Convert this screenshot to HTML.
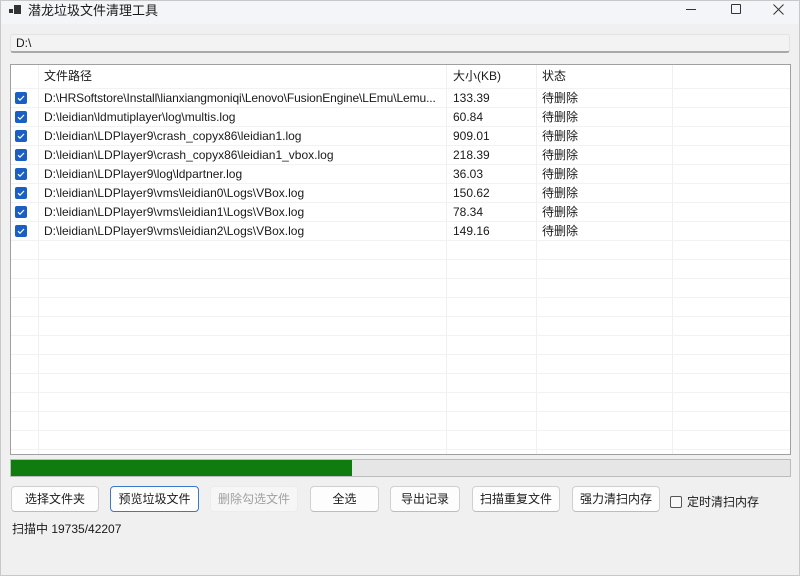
<!DOCTYPE html>
<html><head><meta charset="utf-8"><style>
*{box-sizing:border-box;margin:0;padding:0}
body{width:800px;height:576px;overflow:hidden;background:#f0f0f0;font-family:"Liberation Sans","Noto Sans CJK SC",sans-serif;font-size:12px;color:#1a1a1a;position:relative}
.abs{position:absolute}
.title{left:0;top:0;width:800px;height:24px;background:#f3f5f9}
.tb{left:10px;top:34px;width:780px;height:19px;background:#f3f3f3;border:1px solid #e2e2e2;border-bottom:2px solid #a8a8a8;border-radius:3px;padding:0 5px;font-size:12px;line-height:16px}
.tbl{left:10px;top:64px;width:781px;height:391px;background:#fff;border:1px solid #a0a0a0;overflow:hidden}
.row{position:absolute;left:0;width:780px;height:19px;border-bottom:1px solid #f2f2f2}
.row span{position:absolute;top:0;line-height:18px;height:18px;white-space:nowrap}
.vl{position:absolute;top:0;width:1px;height:391px;background:#f0f0f0}
.cb{position:absolute;left:4px;top:3px;width:12px;height:12px;border-radius:2px;background:#1a5fc4}
.cb svg{position:absolute;left:0;top:0}
.btn{position:absolute;top:486px;height:26px;background:#fdfdfd;border:1px solid #d0d0d0;border-bottom-color:#bcbcbc;border-radius:4px;text-align:center;line-height:24px;font-size:12px}
</style></head><body>
<div class="abs title"></div>
<div class="abs" style="left:9px;top:9px;width:4px;height:4px;background:#333"></div>
<div class="abs" style="left:14px;top:5px;width:7px;height:9px;background:#333"></div>
<div class="abs" style="left:28px;top:1px;font-size:13px;line-height:20px">潜龙垃圾文件清理工具</div>
<div class="abs" style="left:686px;top:9px;width:10px;height:1px;background:#333"></div>
<div class="abs" style="left:731px;top:4px;width:10px;height:10px;border:1px solid #333;border-radius:1px"></div>
<svg class="abs" style="left:773px;top:4px" width="11" height="11"><path d="M0.5 0.5L10.5 10.5M10.5 0.5L0.5 10.5" stroke="#333" stroke-width="1"/></svg>
<div class="abs tb">D:\</div>
<div class="abs tbl">
 <div class="row" style="top:0;height:24px"><span style="left:33px;top:2px">文件路径</span><span style="left:442px;top:2px">大小(KB)</span><span style="left:531px;top:2px">状态</span></div>
 <div class="vl" style="left:27px"></div><div class="vl" style="left:435px"></div><div class="vl" style="left:525px"></div><div class="vl" style="left:661px"></div>
 <div class="row" style="top:24px"><div class="cb"><svg width="12" height="12"><path d="M3 6.2L5 8.2L9 4" fill="none" stroke="#fff" stroke-width="1.2"/></svg></div><span style="left:33px;letter-spacing:-0.1px">D:\HRSoftstore\Install\lianxiangmoniqi\Lenovo\FusionEngine\LEmu\Lemu...</span><span style="left:442px">133.39</span><span style="left:531px">待删除</span></div>
 <div class="row" style="top:43px"><div class="cb"><svg width="12" height="12"><path d="M3 6.2L5 8.2L9 4" fill="none" stroke="#fff" stroke-width="1.2"/></svg></div><span style="left:33px">D:\leidian\ldmutiplayer\log\multis.log</span><span style="left:442px">60.84</span><span style="left:531px">待删除</span></div>
 <div class="row" style="top:62px"><div class="cb"><svg width="12" height="12"><path d="M3 6.2L5 8.2L9 4" fill="none" stroke="#fff" stroke-width="1.2"/></svg></div><span style="left:33px">D:\leidian\LDPlayer9\crash_copyx86\leidian1.log</span><span style="left:442px">909.01</span><span style="left:531px">待删除</span></div>
 <div class="row" style="top:81px"><div class="cb"><svg width="12" height="12"><path d="M3 6.2L5 8.2L9 4" fill="none" stroke="#fff" stroke-width="1.2"/></svg></div><span style="left:33px">D:\leidian\LDPlayer9\crash_copyx86\leidian1_vbox.log</span><span style="left:442px">218.39</span><span style="left:531px">待删除</span></div>
 <div class="row" style="top:100px"><div class="cb"><svg width="12" height="12"><path d="M3 6.2L5 8.2L9 4" fill="none" stroke="#fff" stroke-width="1.2"/></svg></div><span style="left:33px">D:\leidian\LDPlayer9\log\ldpartner.log</span><span style="left:442px">36.03</span><span style="left:531px">待删除</span></div>
 <div class="row" style="top:119px"><div class="cb"><svg width="12" height="12"><path d="M3 6.2L5 8.2L9 4" fill="none" stroke="#fff" stroke-width="1.2"/></svg></div><span style="left:33px">D:\leidian\LDPlayer9\vms\leidian0\Logs\VBox.log</span><span style="left:442px">150.62</span><span style="left:531px">待删除</span></div>
 <div class="row" style="top:138px"><div class="cb"><svg width="12" height="12"><path d="M3 6.2L5 8.2L9 4" fill="none" stroke="#fff" stroke-width="1.2"/></svg></div><span style="left:33px">D:\leidian\LDPlayer9\vms\leidian1\Logs\VBox.log</span><span style="left:442px">78.34</span><span style="left:531px">待删除</span></div>
 <div class="row" style="top:157px"><div class="cb"><svg width="12" height="12"><path d="M3 6.2L5 8.2L9 4" fill="none" stroke="#fff" stroke-width="1.2"/></svg></div><span style="left:33px">D:\leidian\LDPlayer9\vms\leidian2\Logs\VBox.log</span><span style="left:442px">149.16</span><span style="left:531px">待删除</span></div>
 <div class="row" style="top:176px"></div><div class="row" style="top:195px"></div><div class="row" style="top:214px"></div><div class="row" style="top:233px"></div><div class="row" style="top:252px"></div><div class="row" style="top:271px"></div><div class="row" style="top:290px"></div><div class="row" style="top:309px"></div><div class="row" style="top:328px"></div><div class="row" style="top:347px"></div><div class="row" style="top:366px"></div>
</div>
<div class="abs" style="left:10px;top:459px;width:781px;height:18px;background:#e6e6e6;border:1px solid #bcbcbc"></div>
<div class="abs" style="left:11px;top:460px;width:341px;height:16px;background:#107c10"></div>
<div class="btn" style="left:11px;width:88px">选择文件夹</div>
<div class="btn" style="left:110px;width:89px;border:1px solid #3a78c9">预览垃圾文件</div>
<div class="btn" style="left:210px;width:88px;background:#f6f6f6;border-color:#ececec;color:#a0a0a0">删除勾选文件</div>
<div class="btn" style="left:310px;width:69px">全选</div>
<div class="btn" style="left:390px;width:70px">导出记录</div>
<div class="btn" style="left:472px;width:88px">扫描重复文件</div>
<div class="btn" style="left:572px;width:88px">强力清扫内存</div>
<div class="abs" style="left:670px;top:496px;width:12px;height:12px;border:1px solid #555;border-radius:2px;background:#f8f8f8"></div>
<div class="abs" style="left:687px;top:493px;line-height:18px">定时清扫内存</div>
<div class="abs" style="left:12px;top:520px;line-height:18px">扫描中 19735/42207</div>
<div class="abs" style="left:0;top:0;width:800px;height:576px;border:1px solid #c8c8c8;pointer-events:none"></div>
</body></html>
